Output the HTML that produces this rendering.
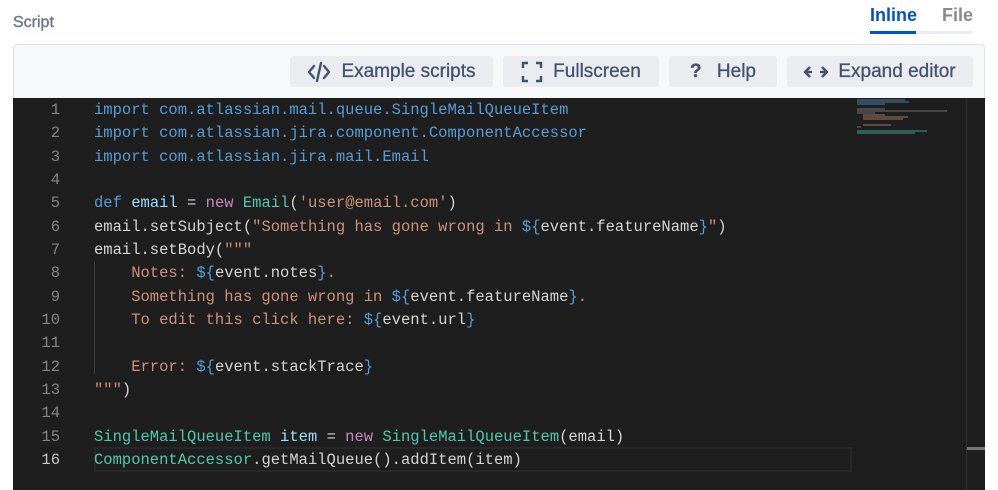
<!DOCTYPE html>
<html><head><meta charset="utf-8"><style>
*{margin:0;padding:0;box-sizing:border-box}
html,body{width:998px;height:490px;overflow:hidden}
body{background:#fff;position:relative;font-family:"Liberation Sans",sans-serif}
.lbl{position:absolute;left:13px;top:14px;font-size:16px;color:#6b778c;-webkit-text-stroke:0.4px #6b778c}
.tab{position:absolute;top:5px;font-size:18px;font-weight:bold}
.panel{position:absolute;left:13px;top:44px;width:972px;height:446px;border:1px solid #dfe1e6;border-bottom:none;border-radius:4px 4px 0 0;background:#f7f8f9}
.btn{position:absolute;top:56px;height:31px;background:#ebecf0;border-radius:3px;color:#42526e;font-size:19px;line-height:31px;display:flex;align-items:center;justify-content:center;gap:10px;-webkit-text-stroke:0.3px #42526e}
.ed{position:absolute;left:13px;top:98px;width:972px;height:392px;background:#1e1e1e}
.code{position:absolute;left:0;top:99px;font-family:"Liberation Mono",monospace;font-size:15.5px;line-height:23.33px;color:#d4d4d4;white-space:pre}
.ln{position:absolute;width:60px;text-align:right;color:#858585}
.t{position:absolute;left:94px}
.k{color:#569cd6}.c{color:#4ec9b0}.s{color:#ce9178}.v{color:#9cdcfe}.n{color:#c586c0}
</style></head><body>
<div class="lbl">Script</div>
<div class="tab" style="left:870px;color:#0052cc">Inline</div>
<div class="tab" style="left:942px;color:#8a8a8a">File</div>
<div style="position:absolute;left:870px;top:31px;width:102px;height:3px;background:#ebecf0"></div>
<div style="position:absolute;left:870px;top:31px;width:46px;height:3px;background:#0052cc"></div>
<div class="panel"></div>
<div class="btn" style="left:290px;width:203px"><svg width="24" height="22" viewBox="0 0 24 22"><path d="M7 5 2 11l5 6M17 5l5 6-5 6M14 2 10 20" stroke="#42526e" stroke-width="2.4" fill="none" stroke-linecap="round" stroke-linejoin="round"/></svg>Example scripts</div>
<div class="btn" style="left:503px;width:156px"><svg width="22" height="22" viewBox="0 0 22 22"><path d="M2 7V2h5M15 2h5v5M20 15v5h-5M7 20H2v-5" stroke="#42526e" stroke-width="2.4" fill="none"/></svg>Fullscreen</div>
<div class="btn" style="left:669px;width:108px"><b style="font-size:19px">?</b>&nbsp;Help</div>
<div class="btn" style="left:787px;width:186px"><svg width="24" height="14" viewBox="0 0 24 14"><path d="M6 2 1 7l5 5M1 7h7M18 2l5 5-5 5M23 7h-7" stroke="#42526e" stroke-width="2.4" fill="none"/></svg>Expand editor</div>
<div class="ed"></div>
<div style="position:absolute;left:966px;top:98px;width:1px;height:392px;background:#333"></div>
<div style="position:absolute;left:967px;top:447px;width:18px;height:3px;background:#777"></div>
<div style="position:absolute;left:94px;top:447px;width:758px;height:25px;border:2px solid #282828"></div>
<div style="position:absolute;left:94px;top:262px;width:1px;height:112px;background:#404040"></div>
<svg style="position:absolute;left:857px;top:99px" width="90" height="40"><g stroke-width="1" opacity=".75"><path d="M0 1h48M0 3h52M0 5h28" stroke="#569cd6"/><path d="M0 10h28M0 12h90M0 14h18" stroke="#888"/><path d="M6 16h22M6 18h45M6 20h40M6 26h28" stroke="#ce9178"/><path d="M0 28h4" stroke="#888"/><path d="M0 32h70M0 34h58" stroke="#4ec9b0"/></g></svg>
<div class="code">
<div class="ln" style="top:0">1</div><div class="t" style="top:0"><span class="k">import com.atlassian.mail.queue.SingleMailQueueItem</span></div>
<div class="ln" style="top:23.33px">2</div><div class="t" style="top:23.33px"><span class="k">import com.atlassian.jira.component.ComponentAccessor</span></div>
<div class="ln" style="top:46.66px">3</div><div class="t" style="top:46.66px"><span class="k">import com.atlassian.jira.mail.Email</span></div>
<div class="ln" style="top:70px">4</div>
<div class="ln" style="top:93.3px">5</div><div class="t" style="top:93.3px"><span class="k">def</span> <span class="v">email</span> = <span class="n">new</span> <span class="c">Email</span>(<span class="s">'user@email.com'</span>)</div>
<div class="ln" style="top:116.6px">6</div><div class="t" style="top:116.6px">email.setSubject(<span class="s">"Something has gone wrong in </span><span class="k">${</span>event.featureName<span class="k">}</span><span class="s">"</span>)</div>
<div class="ln" style="top:140px">7</div><div class="t" style="top:140px">email.setBody(<span class="s">"""</span></div>
<div class="ln" style="top:163.3px">8</div><div class="t" style="top:163.3px"><span class="s">    Notes: </span><span class="k">${</span>event.notes<span class="k">}</span><span class="s">.</span></div>
<div class="ln" style="top:186.6px">9</div><div class="t" style="top:186.6px"><span class="s">    Something has gone wrong in </span><span class="k">${</span>event.featureName<span class="k">}</span><span class="s">.</span></div>
<div class="ln" style="top:210px">10</div><div class="t" style="top:210px"><span class="s">    To edit this click here: </span><span class="k">${</span>event.url<span class="k">}</span></div>
<div class="ln" style="top:233.3px">11</div>
<div class="ln" style="top:256.6px">12</div><div class="t" style="top:256.6px"><span class="s">    Error: </span><span class="k">${</span>event.stackTrace<span class="k">}</span></div>
<div class="ln" style="top:280px">13</div><div class="t" style="top:280px"><span class="s">"""</span>)</div>
<div class="ln" style="top:303.3px">14</div>
<div class="ln" style="top:326.6px">15</div><div class="t" style="top:326.6px"><span class="c">SingleMailQueueItem</span> <span class="v">item</span> = <span class="n">new</span> <span class="c">SingleMailQueueItem</span>(email)</div>
<div class="ln" style="top:350px;color:#c6c6c6">16</div><div class="t" style="top:350px"><span class="c">ComponentAccessor</span>.getMailQueue().addItem(item)</div>
</div>
</body></html>
